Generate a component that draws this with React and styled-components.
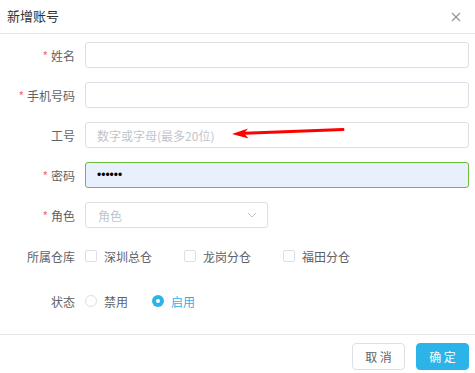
import React from "react";
import styled, { createGlobalStyle } from "styled-components";

const Global = createGlobalStyle`
  html, body { margin: 0; padding: 0; background: #fff; }
  body { font-family: "Noto Sans CJK SC", "Noto Sans", "Liberation Sans", sans-serif; }
  * { box-sizing: border-box; }
`;

const Dialog = styled.div`
  position: relative;
  width: 475px;
  height: 373px;
  background: #fff;
  display: flex;
  flex-direction: column;
  overflow: hidden;
`;

const Header = styled.div`
  height: 34px;
  border-bottom: 1px solid #e6e8ec;
  display: flex;
  align-items: center;
  justify-content: space-between;
  padding: 0 12px 2px 7px;
`;

const Title = styled.div`
  font-size: 13px;
  color: #303133;
`;

const Close = styled.div`
  width: 14px;
  height: 14px;
  display: flex;
  align-items: center;
  justify-content: center;
  margin-top: 2px;
`;

const Form = styled.div`
  padding: 8px 6px 0 0;
  display: flex;
  flex-direction: column;
  height: 301px;
  border-bottom: 1px solid #e6e8ec;
`;

const Item = styled.div`
  display: flex;
  align-items: center;
  height: 26px;
  margin-bottom: ${(p) => p.$mb ?? 14}px;
`;

const Label = styled.div`
  width: 75px;
  margin-right: 10px;
  text-align: right;
  font-size: 12px;
  color: #606266;
  flex-shrink: 0;
  white-space: nowrap;
`;

const Star = styled.span`
  color: #f56c6c;
  margin-right: 3px;
`;

const Input = styled.input`
  flex: 1;
  height: 26px;
  border: 1px solid ${(p) => (p.$ok ? "#67c23a" : "#dcdfe6")};
  border-radius: 3px;
  background: ${(p) => (p.$ok ? "#e8f0fe" : "#fff")};
  padding: 0 11px;
  font-size: 12px;
  font-family: ${(p) => (p.type === "password" ? '"Liberation Sans", Arial, sans-serif' : "inherit")};
  color: #000;
  outline: none;
  &::placeholder { color: #c0c4cc; font-family: "Noto Sans CJK SC", sans-serif; }
`;

const Select = styled.div`
  width: 183px;
  height: 26px;
  border: 1px solid #dcdfe6;
  border-radius: 3px;
  display: flex;
  align-items: center;
  justify-content: space-between;
  padding: 0 10px 0 12px;
  font-size: 12px;
  color: #c0c4cc;
`;

const Group = styled.div`
  display: flex;
  align-items: center;
`;

const Option = styled.label`
  display: flex;
  align-items: center;
  font-size: 12px;
  color: ${(p) => (p.$active ? "#2cb3e8" : "#606266")};
  margin-right: ${(p) => p.$mr}px;
`;

const Box = styled.span`
  width: 12px;
  height: 12px;
  border: 1px solid #dcdfe6;
  border-radius: 2px;
  margin-right: 7px;
  background: #fff;
`;

const Radio = styled.span`
  width: 12px;
  height: 12px;
  border-radius: 50%;
  margin-right: 7px;
  border: ${(p) => (p.$on ? "none" : "1px solid #dcdfe6")};
  background: ${(p) => (p.$on ? "#2cb3e8" : "#fff")};
  display: flex;
  align-items: center;
  justify-content: center;
  &::after {
    content: "";
    display: ${(p) => (p.$on ? "block" : "none")};
    width: 4px;
    height: 4px;
    border-radius: 50%;
    background: #fff;
  }
`;

const Footer = styled.div`
  display: flex;
  justify-content: flex-end;
  gap: 11px;
  padding: 8px 6px 0 0;
`;

const Button = styled.button`
  width: 53px;
  height: 27px;
  border-radius: 4px;
  font-family: inherit;
  font-size: 12px;
  padding: 0;
  border: 1px solid ${(p) => (p.$primary ? "#2cb3e8" : "#dcdfe6")};
  background: ${(p) => (p.$primary ? "#2cb3e8" : "#fff")};
  color: ${(p) => (p.$primary ? "#fff" : "#606266")};
`;

const Arrow = styled.svg`
  position: absolute;
  left: 225px;
  top: 120px;
  pointer-events: none;
`;

export default function App() {
  return (
    <>
      <Global />
      <Dialog>
        <Header>
          <Title>新增账号</Title>
          <Close>
            <svg width="10" height="10" viewBox="0 0 10 10">
              <path d="M1 1 L9 9 M9 1 L1 9" stroke="#909399" strokeWidth="1.1" />
            </svg>
          </Close>
        </Header>
        <Form>
          <Item>
            <Label><Star>*</Star>姓名</Label>
            <Input />
          </Item>
          <Item>
            <Label><Star>*</Star>手机号码</Label>
            <Input />
          </Item>
          <Item>
            <Label>工号</Label>
            <Input placeholder="数字或字母(最多20位)" />
          </Item>
          <Item>
            <Label><Star>*</Star>密码</Label>
            <Input $ok type="password" defaultValue="123456" />
          </Item>
          <Item $mb={15}>
            <Label><Star>*</Star>角色</Label>
            <Select>
              <span>角色</span>
              <svg width="10" height="6" viewBox="0 0 10 6">
                <path d="M1 1 L5 5 L9 1" fill="none" stroke="#c0c4cc" strokeWidth="1" />
              </svg>
            </Select>
          </Item>
          <Item $mb={19}>
            <Label>所属仓库</Label>
            <Group>
              <Option $mr={32}><Box />深圳总仓</Option>
              <Option $mr={32}><Box />龙岗分仓</Option>
              <Option $mr={0}><Box />福田分仓</Option>
            </Group>
          </Item>
          <Item $mb={0}>
            <Label>状态</Label>
            <Group>
              <Option $mr={24}><Radio />禁用</Option>
              <Option $active $mr={0}><Radio $on />启用</Option>
            </Group>
          </Item>
        </Form>
        <Footer>
          <Button>取 消</Button>
          <Button $primary>确 定</Button>
        </Footer>
        <Arrow width="130" height="25" viewBox="0 0 130 25">
          <path d="M118 9.5 L20 13.2" stroke="#ff0000" strokeWidth="3" strokeLinecap="round" />
          <path d="M7 14 L23 8.5 L19 13.3 L23.5 18.5 Z" fill="#ff0000" />
        </Arrow>
      </Dialog>
    </>
  );
}
